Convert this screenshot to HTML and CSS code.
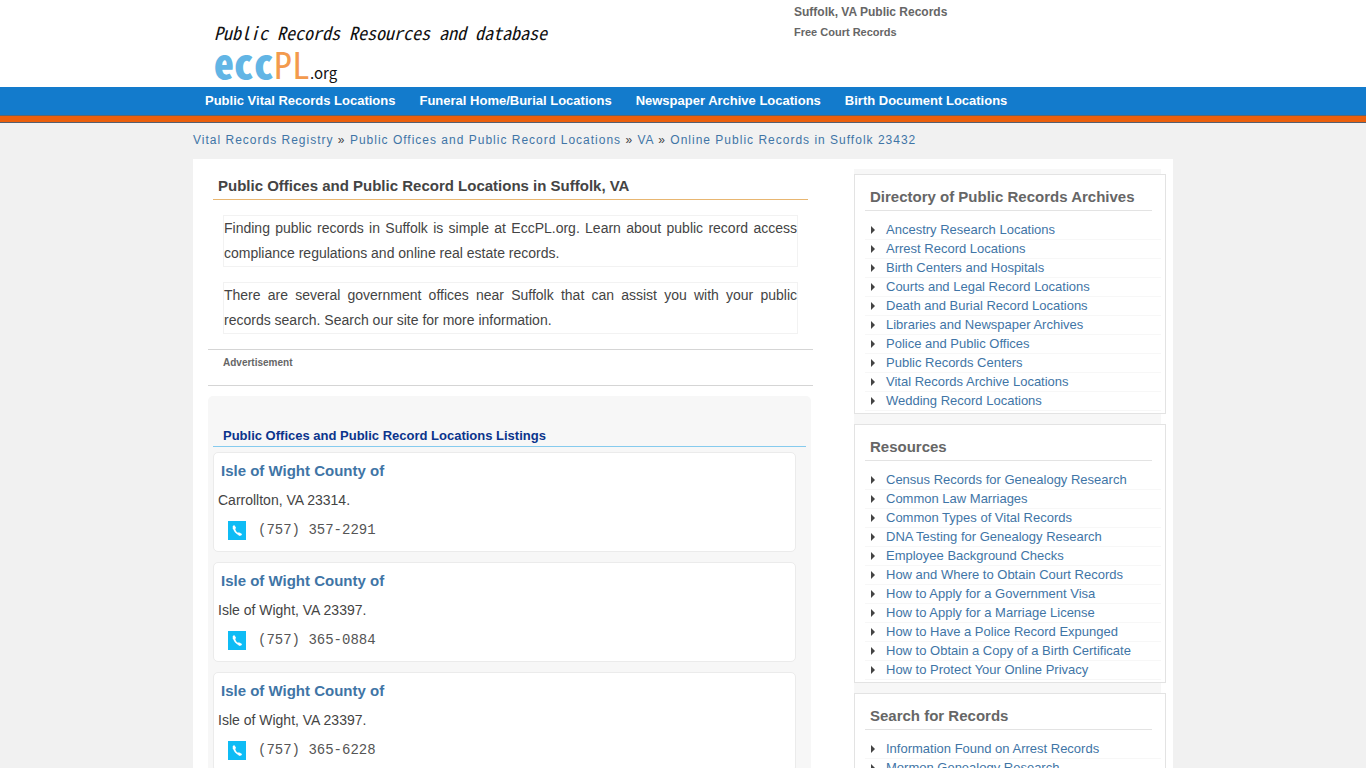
FILE: index.html
```html
<!DOCTYPE html>
<html lang="en">
<head>
  <meta charset="UTF-8">
  <meta name="viewport" content="width=device-width, initial-scale=1">
  <title>Public Offices and Public Record Locations in Suffolk, VA</title>
  <link rel="stylesheet" href="styles.css">
</head>
<body>
  <svg class="sprite" aria-hidden="true">
    <symbol id="phone" viewBox="0 0 18 19">
      <rect width="18" height="19" fill="#0fbcf5"/>
      <path d="M6.2 5.6C5.8 9.4 8.2 12.6 12.2 13.3" fill="none" stroke="#fff" stroke-width="1.8"/>
      <path d="M5 5 6.4 4.6 7.8 7 6.6 8.2 5 8ZM9.6 12.6 10.8 11.6 13.7 13 13.2 14.2 11 14.6Z" fill="#fff" stroke="#fff" stroke-width=".5" stroke-linejoin="round"/>
    </symbol>
  </svg>

  <header class="header">
    <div class="wrap header-row">
      <a class="logo" href="#">
        <span class="tagline">Public Records Resources and database</span>
        <span class="brand"><b class="ecc">ecc</b><span class="pl">PL</span><span class="org">.org</span></span>
      </a>
      <div class="header-text">
        <h2>Suffolk, VA Public Records</h2>
        <h3>Free Court Records</h3>
      </div>
    </div>
  </header>

  <nav class="nav">
    <div class="wrap nav-row">
      <a href="#">Public Vital Records Locations</a>
      <a href="#">Funeral Home/Burial Locations</a>
      <a href="#">Newspaper Archive Locations</a>
      <a href="#">Birth Document Locations</a>
    </div>
  </nav>

  <div class="wrap crumbs">
    <a href="#">Vital Records Registry</a> <span>»</span>
    <a href="#">Public Offices and Public Record Locations</a> <span>»</span>
    <a href="#">VA</a> <span>»</span>
    <a href="#">Online Public Records in Suffolk 23432</a>
  </div>

  <div class="wrap content">
    <main class="main">
      <h1>Public Offices and Public Record Locations in Suffolk, VA</h1>
      <p class="intro">Finding public records in Suffolk is simple at EccPL.org. Learn about public record access compliance regulations and online real estate records.</p>
      <p class="intro">There are several government offices near Suffolk that can assist you with your public records search. Search our site for more information.</p>
      <div class="ad">Advertisement</div>

      <section class="listings">
        <h2>Public Offices and Public Record Locations Listings</h2>
        <article class="card">
          <h3><a href="#">Isle of Wight County of</a></h3>
          <p>Carrollton, VA 23314.</p>
          <div class="phone"><svg><use href="#phone"/></svg>(757) 357-2291</div>
        </article>
        <article class="card">
          <h3><a href="#">Isle of Wight County of</a></h3>
          <p>Isle of Wight, VA 23397.</p>
          <div class="phone"><svg><use href="#phone"/></svg>(757) 365-0884</div>
        </article>
        <article class="card">
          <h3><a href="#">Isle of Wight County of</a></h3>
          <p>Isle of Wight, VA 23397.</p>
          <div class="phone"><svg><use href="#phone"/></svg>(757) 365-6228</div>
        </article>
      </section>
    </main>

    <aside class="sidebar">
      <section class="box">
        <h2>Directory of Public Records Archives</h2>
        <ul>
          <li><a href="#">Ancestry Research Locations</a></li>
          <li><a href="#">Arrest Record Locations</a></li>
          <li><a href="#">Birth Centers and Hospitals</a></li>
          <li><a href="#">Courts and Legal Record Locations</a></li>
          <li><a href="#">Death and Burial Record Locations</a></li>
          <li><a href="#">Libraries and Newspaper Archives</a></li>
          <li><a href="#">Police and Public Offices</a></li>
          <li><a href="#">Public Records Centers</a></li>
          <li><a href="#">Vital Records Archive Locations</a></li>
          <li><a href="#">Wedding Record Locations</a></li>
        </ul>
      </section>
      <section class="box">
        <h2>Resources</h2>
        <ul>
          <li><a href="#">Census Records for Genealogy Research</a></li>
          <li><a href="#">Common Law Marriages</a></li>
          <li><a href="#">Common Types of Vital Records</a></li>
          <li><a href="#">DNA Testing for Genealogy Research</a></li>
          <li><a href="#">Employee Background Checks</a></li>
          <li><a href="#">How and Where to Obtain Court Records</a></li>
          <li><a href="#">How to Apply for a Government Visa</a></li>
          <li><a href="#">How to Apply for a Marriage License</a></li>
          <li><a href="#">How to Have a Police Record Expunged</a></li>
          <li><a href="#">How to Obtain a Copy of a Birth Certificate</a></li>
          <li><a href="#">How to Protect Your Online Privacy</a></li>
        </ul>
      </section>
      <section class="box">
        <h2>Search for Records</h2>
        <ul>
          <li><a href="#">Information Found on Arrest Records</a></li>
          <li><a href="#">Mormon Genealogy Research</a></li>
        </ul>
      </section>
    </aside>
  </div>
</body>
</html>
```

FILE: styles.css
```css
* {
  box-sizing: border-box;
}
body {
  margin: 0;
  font-family: "Liberation Sans", Arial, sans-serif;
  font-size: 14px;
  color: #444;
  background: #f1f1f1;
}
h1, h2, h3, p, ul {
  margin: 0;
  padding: 0;
}
a {
  color: #3f75a6;
  text-decoration: none;
}
a:hover {
  text-decoration: underline;
}
.sprite {
  display: none;
}
.wrap {
  max-width: 980px;
  margin: 0 auto;
}

/* header */
.header {
  background: #fff;
}
.header-row {
  display: flex;
  min-height: 87px;
  padding-left: 21px;
}
.logo {
  flex: 0 0 580px;
  padding-top: 22px;
  color: #111;
}
.logo:hover {
  text-decoration: none;
}
.tagline {
  display: block;
  font: italic 18px/20px "Noto Sans CJK JP", monospace;
  font-feature-settings: "hwid";
}
.brand {
  display: flex;
  align-items: baseline;
  font-family: "Noto Sans CJK JP", sans-serif;
  line-height: 40px;
}
.ecc {
  font-size: 40px;
  font-weight: 900;
  font-feature-settings: "hwid";
  color: #62b5e5;
}
.pl {
  font-size: 36px;
  font-feature-settings: "hwid";
  color: #f39a4d;
}
.org {
  font-size: 15px;
  line-height: 20px;
}
.header-text {
  padding-top: 2px;
  color: #666;
}
.header-text h2 {
  font-size: 12px;
  line-height: 20px;
}
.header-text h3 {
  font-size: 11px;
  line-height: 20px;
}

/* navigation */
.nav {
  background: #137bcc;
  border-bottom: 1px solid #555f70;
}
.nav::after {
  content: "";
  display: block;
  height: 6px;
  background: #eb5f0c;
  border-top: 1px solid #5c6670;
}
.nav-row {
  display: flex;
  flex-wrap: wrap;
  gap: 0 24px;
  padding: 0 12px;
}
.nav a {
  font-size: 13px;
  font-weight: bold;
  line-height: 28px;
  color: #fff;
}

.crumbs {
  padding: 7px 0 9px;
  font-size: 12px;
  line-height: 20px;
  letter-spacing: 1px;
}

/* page */
.content {
  display: flex;
  justify-content: space-between;
  padding: 10px 7px 20px 15px;
  background: #fff;
}
.main {
  flex: 0 1 605px;
}
.main h1 {
  margin: 0 5px 15px;
  padding: 5px 5px 1px;
  font-size: 15px;
  line-height: 24px;
  border-bottom: 1px solid #e8b671;
}
.intro {
  margin: 0 15px 15px;
  border: 1px solid #f2f2f2;
  line-height: 25px;
  text-align: justify;
}
.ad {
  min-height: 37px;
  padding: 4px 15px;
  font-size: 10px;
  font-weight: bold;
  line-height: 18px;
  color: #666;
  border-top: 1px solid #d5d5d5;
  border-bottom: 1px solid #d5d5d5;
}
.listings {
  margin: 10px 2px 0 0;
  padding: 30px 5px 10px;
  background: #f7f7f7;
  border-radius: 5px;
}
.listings > h2 {
  margin-bottom: 5px;
  padding: 0 10px;
  font-size: 13px;
  line-height: 20px;
  color: #0b348c;
  border-bottom: 1px solid #86cbee;
}
.card {
  margin: 0 10px 10px 0;
  padding: 5px 4px 7px;
  min-height: 100px;
  background: #fff;
  border: 1px solid #ebebeb;
  border-radius: 5px;
}
.card h3 {
  padding-left: 3px;
  font-size: 15px;
  line-height: 26px;
}
.card p {
  line-height: 32px;
}
.phone {
  display: flex;
  align-items: center;
  gap: 12px;
  padding-left: 10px;
  font: 14px/28px "Liberation Mono", "Courier New", monospace;
  color: #555;
}
.phone svg {
  width: 18px;
  height: 19px;
}

/* sidebar */
.sidebar {
  flex: 0 0 312px;
  background: linear-gradient(#f7f7f7, #f7f7f7) no-repeat;
  background-size: 307px 100%;
  padding-top: 5px;
}
.box {
  margin-bottom: 10px;
  padding: 10px 4px 2px 10px;
  background: #fff;
  border: 1px solid #e3e3e3;
}
.box h2 {
  margin: 0 9px 10px 0;
  padding: 0 5px 1px;
  font-size: 15px;
  line-height: 24px;
  color: #666;
  border-bottom: 1px solid #e3e3e3;
}
.box ul {
  list-style: none;
}
.box li {
  display: flex;
  align-items: center;
  padding-left: 6px;
  font-size: 13px;
  line-height: 18px;
  border-bottom: 1px solid #f7f7f7;
}
.box li::before {
  content: "";
  margin-right: 11px;
  border: 4px solid transparent;
  border-left-color: #444;
  border-right: 0;
}
```
